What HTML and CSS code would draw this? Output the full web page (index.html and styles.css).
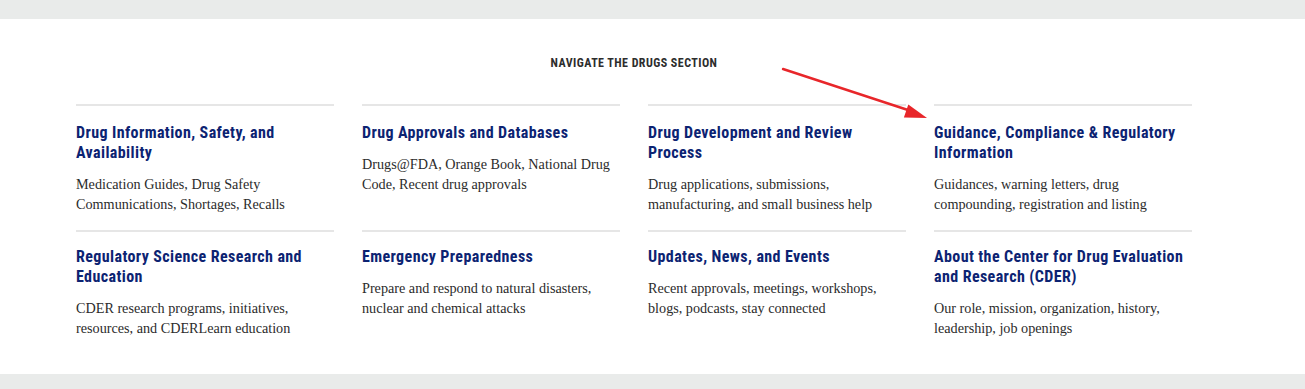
FILE: index.html
```html
<!DOCTYPE html>
<html lang="en">
<head>
<meta charset="utf-8">
<title>Navigate the Drugs Section</title>
<link rel="stylesheet" href="styles.css">
</head>
<body>
<div class="band"></div>
<section class="nav-section">
  <h2 class="section-title">NAVIGATE THE DRUGS SECTION</h2>
  <div class="grid">
    <div class="item">
      <a class="item-title" href="#">Drug Information, Safety, and Availability</a>
      <p class="item-desc">Medication Guides, Drug Safety Communications, Shortages, Recalls</p>
    </div>
    <div class="item">
      <a class="item-title" href="#">Drug Approvals and Databases</a>
      <p class="item-desc">Drugs@FDA, Orange Book, National Drug Code, Recent drug approvals</p>
    </div>
    <div class="item">
      <a class="item-title" href="#">Drug Development and Review Process</a>
      <p class="item-desc">Drug applications, submissions, manufacturing, and small business help</p>
    </div>
    <div class="item">
      <a class="item-title" href="#">Guidance, Compliance &amp; Regulatory Information</a>
      <p class="item-desc">Guidances, warning letters, drug compounding, registration and listing</p>
    </div>
    <div class="item">
      <a class="item-title" href="#">Regulatory Science Research and Education</a>
      <p class="item-desc">CDER research programs, initiatives, resources, and CDERLearn education</p>
    </div>
    <div class="item">
      <a class="item-title" href="#">Emergency Preparedness</a>
      <p class="item-desc">Prepare and respond to natural disasters, nuclear and chemical attacks</p>
    </div>
    <div class="item">
      <a class="item-title" href="#">Updates, News, and Events</a>
      <p class="item-desc">Recent approvals, meetings, workshops, blogs, podcasts, stay connected</p>
    </div>
    <div class="item">
      <a class="item-title" href="#">About the Center for Drug Evaluation and Research (CDER)</a>
      <p class="item-desc">Our role, mission, organization, history, leadership, job openings</p>
    </div>
  </div>
  <svg class="arrow" width="160" height="60" viewBox="0 0 160 60" aria-hidden="true">
    <line x1="2" y1="4" x2="130" y2="46" stroke="#e8262a" stroke-width="2.4" stroke-linecap="round"/>
    <polygon points="146,53 122.9,52.6 127.3,39.4" fill="#e8262a"/>
  </svg>
</section>
<div class="band band-bottom"></div>
</body>
</html>
```
FILE: styles.css
```css
* { box-sizing: border-box; }
html, body { margin: 0; padding: 0; background: #fff; }
body { height: 389px; overflow: hidden; }

.band { height: 19px; background: #e9ebea; }
.band-bottom { height: 20px; }

.nav-section {
  position: relative;
  padding: 36px 0 37px 76px;
  height: 355px;
}

.section-title {
  width: 1116px;
  margin: 0 0 33px;
  text-align: center;
  font-family: "Liberation Sans Narrow", "Roboto Condensed", Roboto, sans-serif;
  font-weight: 700;
  font-size: 12px;
  line-height: 16px;
  letter-spacing: 0.45px;
  color: #2d2d2d;
}

.grid {
  width: 1116px;
  display: grid;
  grid-template-columns: repeat(4, 258px);
  column-gap: 28px;
  row-gap: 16px;
}

.item {
  border-top: 2px solid #e6e6e6;
  padding-top: 17px;
}

.item:nth-child(n+5) {
  padding-top: 15px;
}

.item-title {
  display: block;
  font-family: "Liberation Sans Narrow", "Roboto Condensed", Roboto, sans-serif;
  font-weight: 700;
  font-size: 16px;
  line-height: 20px;
  letter-spacing: 0.4px;
  color: #0c2372;
  text-decoration: none;
}

.item-desc {
  margin: 12px 0 0;
  font-family: "Liberation Serif", serif;
  font-size: 14.2px;
  line-height: 19.5px;
  color: #2b2b2b;
}

.arrow {
  position: absolute;
  left: 781px;
  top: 46px;
}
```
